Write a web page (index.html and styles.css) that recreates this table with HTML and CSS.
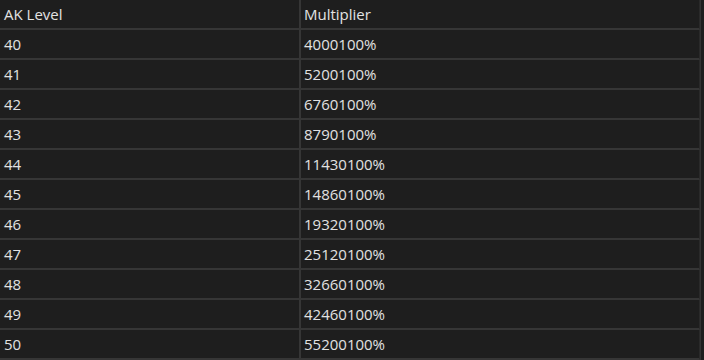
FILE: index.html
```html
<!DOCTYPE html>
<html>
<head>
<meta charset="utf-8">
<link rel="stylesheet" href="styles.css">
</head>
<body>
<div class="wrap">
<table class="grid">
<thead>
<tr><th>AK Level</th><th>Multiplier</th></tr>
</thead>
<tbody>
<tr><td>40</td><td>4000100%</td></tr>
<tr><td>41</td><td>5200100%</td></tr>
<tr><td>42</td><td>6760100%</td></tr>
<tr><td>43</td><td>8790100%</td></tr>
<tr><td>44</td><td>11430100%</td></tr>
<tr><td>45</td><td>14860100%</td></tr>
<tr><td>46</td><td>19320100%</td></tr>
<tr><td>47</td><td>25120100%</td></tr>
<tr><td>48</td><td>32660100%</td></tr>
<tr><td>49</td><td>42460100%</td></tr>
<tr><td>50</td><td>55200100%</td></tr>
</tbody>
</table>
</div>
</body>
</html>
```
FILE: styles.css
```css
html, body {
  margin: 0;
  padding: 0;
  background: #1e1e1e;
}
.wrap {
  width: 704px;
  height: 360px;
  overflow: hidden;
  background: #1e1e1e;
}
.grid {
  width: 701px;
  border-collapse: separate;
  border-spacing: 0;
  font-family: "Open Sans", "Liberation Sans", sans-serif;
  font-size: 15px;
  color: #e2e2e2;
  border-right: 1px solid #333333;
}
.grid th, .grid td {
  padding: 0 0 0 4px;
  text-align: left;
  font-weight: normal;
  vertical-align: middle;
  border-bottom: 2px solid #363636;
  box-sizing: border-box;
  line-height: 28px;
}
.grid th:first-child, .grid td:first-child {
  width: 301px;
  border-right: 2px solid #363636;
}
.grid td:last-child, .grid th:last-child {
  padding-left: 3px;
  border-right: 1px solid #2a2a2a;
}
.grid thead th {
  height: 30px;
}
.grid tbody td {
  height: 30px;
}
.grid thead th {
  height: 28px;
}
```
